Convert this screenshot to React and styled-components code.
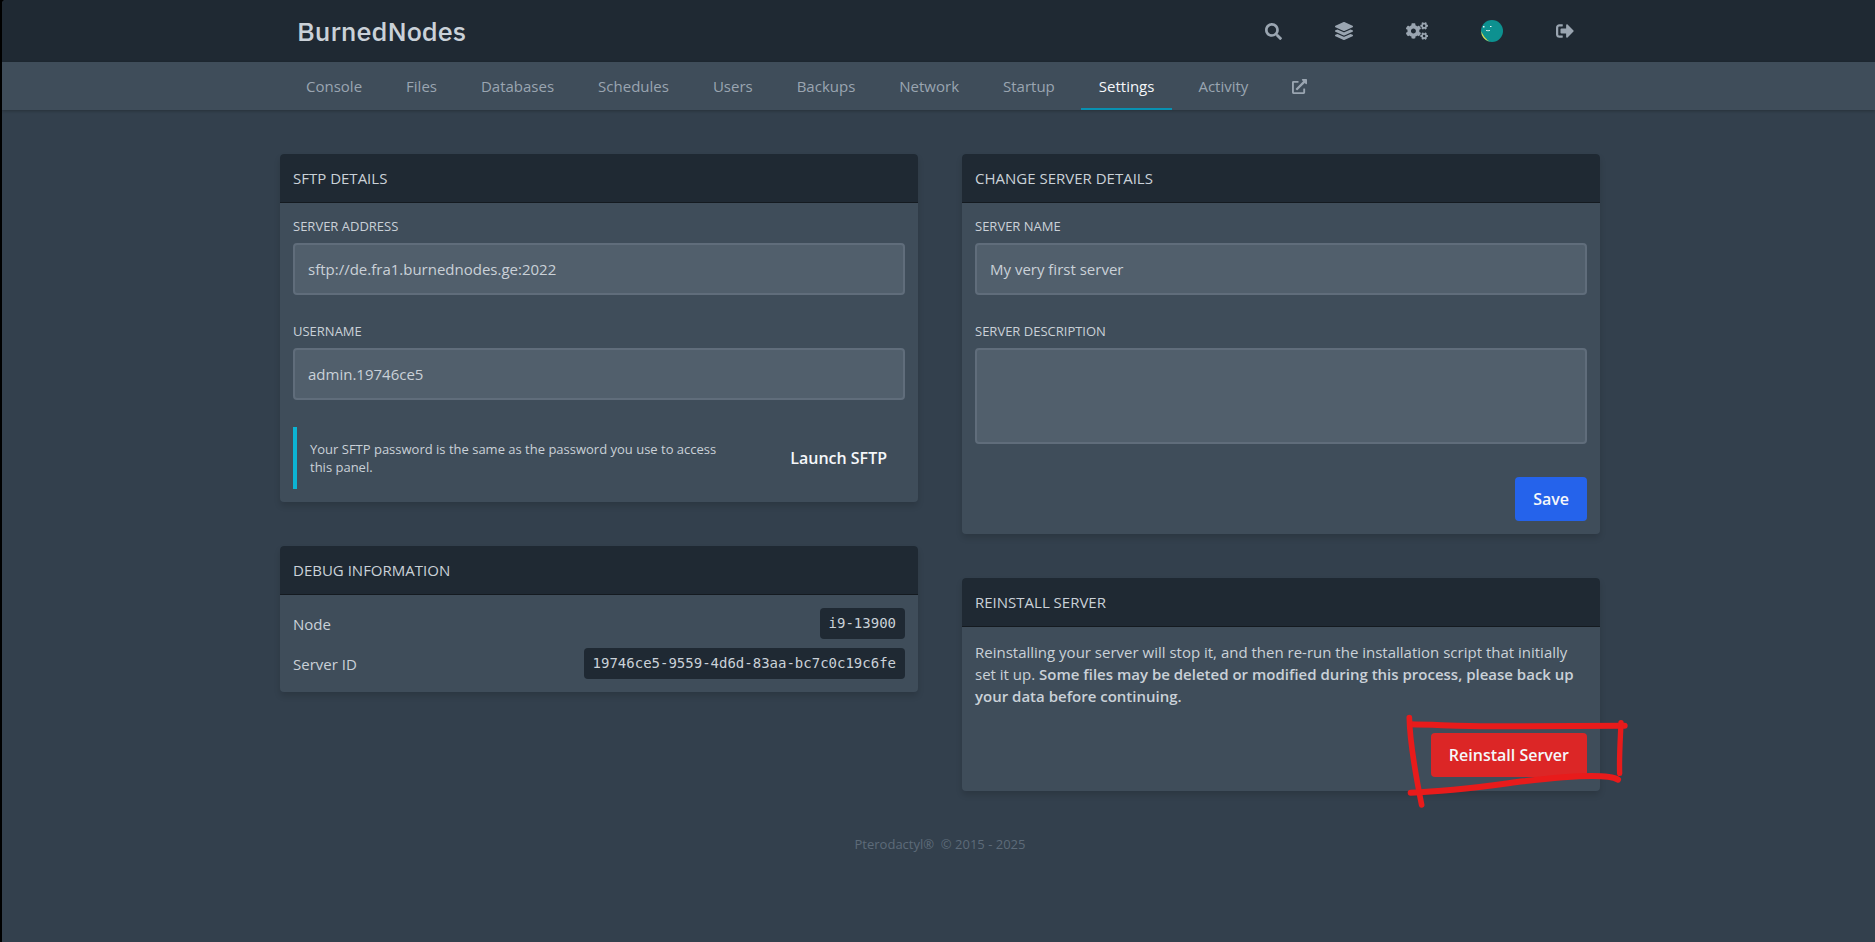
import React from "react";
import styled, { createGlobalStyle, css } from "styled-components";
import {
  FaSearch,
  FaLayerGroup,
  FaCogs,
  FaSignOutAlt,
  FaExternalLinkAlt,
} from "react-icons/fa";

const GlobalStyle = createGlobalStyle`
  *, *::before, *::after { box-sizing: border-box; }
  html { background: #000; }
  body {
    margin: 0;
    font-family: "Open Sans", "Noto Sans", sans-serif;
    font-size: 15px;
    line-height: 22px;
    color: #cad1d8;
  }
  h1, h2, p, dl, dd { margin: 0; font-weight: 400; }
  button, input, textarea { font: inherit; color: inherit; }
  a { color: inherit; text-decoration: none; }
`;

const Page = styled.div`
  min-height: 100vh;
  margin-left: 2px;
  border-top-left-radius: 4px;
  overflow: hidden;
  background: #33404d;
`;

const Container = styled.div`
  width: 100%;
  max-width: 1320px;
  margin: 0 auto;
`;

const TopBar = styled.header`
  background: #1f2933;
  padding-left: 3px;
`;

const TopBarInner = styled(Container)`
  display: flex;
  align-items: center;
  height: 62px;
`;

const Brand = styled.a`
  flex: 1;
  padding-left: 17px;
  font-family: "IBM Plex Sans", Roboto, sans-serif;
  font-size: 27px;
  font-weight: 500;
  line-height: 32px;
`;

const Actions = styled.nav`
  display: flex;
  gap: 1px;
  height: 100%;
`;

const iconItem = css`
  display: flex;
  align-items: center;
  height: 100%;
  padding: 0 26px;
  color: #9aa5b1;
`;

const ActionLink = styled.a`
  ${iconItem}
`;

const ActionButton = styled.button`
  ${iconItem}
  border: 0;
  background: none;
  cursor: pointer;
`;

const SubNav = styled.nav`
  position: relative;
  background: #3f4d5a;
  padding-left: 3px;
  box-shadow: 0 1px 3px rgba(0, 0, 0, 0.25);
`;

const SubNavInner = styled(Container)`
  display: flex;
  gap: 8px;
  height: 48px;
  padding-left: 8px;
`;

const Tab = styled.a`
  display: flex;
  align-items: center;
  padding: 0 18px;
  color: ${(p) => (p.$active ? "#f5f7fa" : "#9aa5b1")};
  box-shadow: ${(p) => (p.$active ? "inset 0 -2px #0891b2" : "none")};
`;

const Main = styled.main`
  padding: 44px 0 0 3px;
`;

const Columns = styled(Container)`
  display: grid;
  grid-template-columns: 1fr 1fr;
  align-items: start;
  gap: 44px;
`;

const Column = styled.div`
  display: grid;
  gap: 44px;
`;

const Card = styled.section`
  border-radius: 4px;
  background: #3f4d5a;
  box-shadow: 0 4px 6px rgba(0, 0, 0, 0.14);
`;

const CardTitle = styled.h2`
  padding: 13px;
  border-bottom: 1px solid #141a20;
  border-radius: 4px 4px 0 0;
  background: #1f2933;
  font-size: 15px;
  line-height: 22px;
  text-transform: uppercase;
`;

const CardBody = styled.div`
  padding: ${(p) => p.$pad || "13px"};
`;

const Field = styled.div`
  display: grid;
  gap: 7px;
  margin-bottom: ${(p) => p.$after || "26px"};
`;

const Label = styled.label`
  font-size: 13px;
  line-height: 20px;
  text-transform: uppercase;
`;

const inputLook = css`
  display: block;
  width: 100%;
  border: 2px solid #606d7b;
  border-radius: 4px;
  background: #515f6c;
  padding: 13px;
  outline: 0;
`;

const Input = styled.input`
  ${inputLook}
  height: 52px;
`;

const TextArea = styled.textarea`
  ${inputLook}
  height: 96px;
  resize: none;
`;

const SftpRow = styled.div`
  display: flex;
  align-items: center;
  gap: 26px;
`;

const Callout = styled.p`
  flex: 1;
  padding: 13px;
  border-left: 4px solid #0cb3d3;
  font-size: 13px;
  line-height: 18px;
`;

const buttonLook = css`
  display: inline-block;
  border: 0;
  border-radius: 4px;
  padding: 9px 18px;
  background: ${(p) => p.$bg || "transparent"};
  color: #f5f7fa;
  font-size: 16px;
  font-weight: 600;
  line-height: 26px;
  cursor: pointer;
`;

const Button = styled.button`
  ${buttonLook}
`;

const ButtonLink = styled.a`
  ${buttonLook}
`;

const ButtonRow = styled.div`
  display: flex;
  justify-content: flex-end;
  margin-top: ${(p) => p.$above};
`;

const DebugList = styled.dl`
  display: grid;
  gap: 9px;
`;

const DebugRow = styled.div`
  display: flex;
  align-items: center;
  justify-content: space-between;
`;

const Code = styled.code`
  display: block;
  padding: 4px 9px;
  border-radius: 4px;
  background: #1f2933;
  font-family: "DejaVu Sans Mono", monospace;
  font-size: 14px;
  line-height: 23px;
`;

const Strong = styled.strong`
  font-weight: 600;
`;

const Highlighted = styled.div`
  position: relative;
`;

const Scribble = styled.svg`
  position: absolute;
  right: -53px;
  top: -33px;
  width: 250px;
  height: 120px;
  pointer-events: none;
  fill: none;
  stroke: #e81b1b;
  stroke-linecap: round;
  stroke-linejoin: round;
`;

const Footer = styled.footer`
  padding: 44px 0 18px;
  color: #5d6b79;
  font-size: 13px;
  line-height: 18px;
  text-align: center;
`;

const TABS = [
  "Console",
  "Files",
  "Databases",
  "Schedules",
  "Users",
  "Backups",
  "Network",
  "Startup",
  "Settings",
  "Activity",
];

function Avatar() {
  return (
    <svg width="22" height="22" viewBox="0 0 22 22" aria-hidden="true">
      <circle cx="11" cy="11" r="11" fill="#0d9190" />
      <path d="M.2 11 A11 11 0 0 0 9 21.800 Q3 18.500 .2 11Z" fill="#e3d94b" />
      <path d="M2 6h1.500v1.500H2zM9 6h1.500v1H9z" fill="#e6f4f3" />
      <path d="M5 10.300l1 .4h2l1-.4" stroke="#c5e6e4" fill="none" />
    </svg>
  );
}

export default function App() {
  return (
    <>
      <GlobalStyle />
      <Page>
        <TopBar>
          <TopBarInner>
            <Brand href="#">BurnedNodes</Brand>
            <Actions aria-label="Account">
              <ActionButton type="button" aria-label="Search">
                <FaSearch size={17} />
              </ActionButton>
              <ActionLink href="#" aria-label="Dashboard">
                <FaLayerGroup size={18} />
              </ActionLink>
              <ActionLink href="#" aria-label="Admin">
                <FaCogs size={22} />
              </ActionLink>
              <ActionLink href="#" aria-label="Account settings">
                <Avatar />
              </ActionLink>
              <ActionButton type="button" aria-label="Sign out">
                <FaSignOutAlt size={18} />
              </ActionButton>
            </Actions>
          </TopBarInner>
        </TopBar>
        <SubNav aria-label="Server">
          <SubNavInner>
            {TABS.map((name) => (
              <Tab
                key={name}
                href="#"
                $active={name === "Settings"}
                aria-current={name === "Settings" ? "page" : undefined}
              >
                {name}
              </Tab>
            ))}
            <Tab href="#" aria-label="Open in admin">
              <FaExternalLinkAlt size={15} />
            </Tab>
          </SubNavInner>
        </SubNav>
        <Main>
          <Columns>
            <Column>
              <Card>
                <CardTitle>SFTP Details</CardTitle>
                <CardBody>
                  <Field>
                    <Label htmlFor="address">Server Address</Label>
                    <Input
                      id="address"
                      readOnly
                      value="sftp://de.fra1.burnednodes.ge:2022"
                    />
                  </Field>
                  <Field $after="27px">
                    <Label htmlFor="username">Username</Label>
                    <Input id="username" readOnly value="admin.19746ce5" />
                  </Field>
                  <SftpRow>
                    <Callout>
                      Your SFTP password is the same as the password you use to
                      access this panel.
                    </Callout>
                    <ButtonLink href="#">Launch SFTP</ButtonLink>
                  </SftpRow>
                </CardBody>
              </Card>
              <Card>
                <CardTitle>Debug Information</CardTitle>
                <CardBody>
                  <DebugList>
                    <DebugRow>
                      <dt>Node</dt>
                      <dd>
                        <Code>i9-13900</Code>
                      </dd>
                    </DebugRow>
                    <DebugRow>
                      <dt>Server ID</dt>
                      <dd>
                        <Code>19746ce5-9559-4d6d-83aa-bc7c0c19c6fe</Code>
                      </dd>
                    </DebugRow>
                  </DebugList>
                </CardBody>
              </Card>
            </Column>
            <Column>
              <Card>
                <CardTitle>Change Server Details</CardTitle>
                <CardBody>
                  <Field>
                    <Label htmlFor="name">Server Name</Label>
                    <Input id="name" defaultValue="My very first server" />
                  </Field>
                  <Field $after="0">
                    <Label htmlFor="description">Server Description</Label>
                    <TextArea id="description" />
                  </Field>
                  <ButtonRow $above="33px">
                    <Button type="button" $bg="#2563eb">
                      Save
                    </Button>
                  </ButtonRow>
                </CardBody>
              </Card>
              <Card>
                <CardTitle>Reinstall Server</CardTitle>
                <CardBody $pad="14px 13px">
                  <p>
                    Reinstalling your server will stop it, and then re-run the
                    installation script that initially set it up.{" "}
                    <Strong>
                      Some files may be deleted or modified during this process,
                      please back up your data before continuing.
                    </Strong>
                  </p>
                  <ButtonRow $above="26px">
                    <Highlighted>
                      <Button type="button" $bg="#dc2626">
                        Reinstall Server
                      </Button>
                      <Scribble viewBox="0 0 750 360" aria-hidden="true">
                        <path
                          strokeWidth="18"
                          d="M60 73C150 75 220 79 300 79C440 78 580 77 704 77"
                        />
                        <path
                          strokeWidth="17"
                          d="M58 53C59 110 78 230 95 315"
                        />
                        <path
                          strokeWidth="18"
                          d="M62 278C190 274 300 257 400 244C500 232 650 218 684 239"
                        />
                        <path
                          strokeWidth="16"
                          d="M693 68C691 120 687 170 689 220"
                        />
                      </Scribble>
                    </Highlighted>
                  </ButtonRow>
                </CardBody>
              </Card>
            </Column>
          </Columns>
          <Footer>
            <a href="#">Pterodactyl®</a>&nbsp; © 2015 - 2025
          </Footer>
        </Main>
      </Page>
    </>
  );
}
